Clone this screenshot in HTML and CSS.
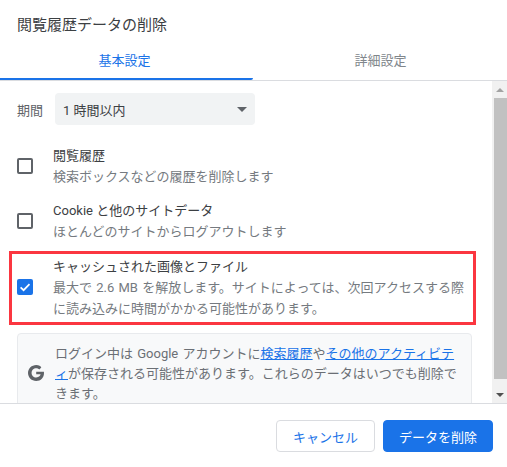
FILE: index.html
```html
<!DOCTYPE html>
<html lang="ja">
<head>
<meta charset="utf-8">
<title>閲覧履歴データの削除</title>
<link rel="stylesheet" href="styles.css">
</head>
<body>
<div class="dialog">
  <h1 class="title">閲覧履歴データの削除</h1>
  <div class="tabs">
    <div class="tab tab-active">基本設定</div>
    <div class="tab">詳細設定</div>
  </div>
  <div class="middle">
    <div class="content">
      <div class="period">
        <span class="period-label">期間</span>
        <div class="select">
          <span>1 時間以内</span>
          <span class="select-arrow"></span>
        </div>
      </div>
      <div class="option option-first">
        <span class="checkbox"></span>
        <div class="option-text">
          <div class="option-title">閲覧履歴</div>
          <div class="option-sub">検索ボックスなどの履歴を削除します</div>
        </div>
      </div>
      <div class="option">
        <span class="checkbox"></span>
        <div class="option-text">
          <div class="option-title">Cookie と他のサイトデータ</div>
          <div class="option-sub">ほとんどのサイトからログアウトします</div>
        </div>
      </div>
      <div class="option option-marked">
        <span class="checkbox checkbox-on">
          <svg viewBox="0 0 16 16" width="16" height="16"><path d="M3.6 8.3 6.6 11.2 12.5 5.2" fill="none" stroke="#fff" stroke-width="1.7"/></svg>
        </span>
        <div class="option-text">
          <div class="option-title">キャッシュされた画像とファイル</div>
          <div class="option-sub">最大で 2.6 MB を解放します。サイトによっては、次回アクセスする際に読み込みに時間がかかる可能性があります。</div>
        </div>
      </div>
      <div class="notice">
        <svg class="g-icon" viewBox="0 0 16 16" width="16" height="16"><path d="M8.2 6.8v2.5h4.4c-.2 1.2-1.500 3.200-4.400 3.200-2.600 0-4.600-2.100-4.600-4.600s2-4.600 4.600-4.600c1.500 0 2.500.6 3.100 1.200l2-1.900C12.900 1 10.800 0 8.200 0 3.700 0 0 3.600 0 8s3.700 8 8.200 8c4.700 0 7.800-3.300 7.800-8 0-.5-.1-.9-.1-1.200H8.200z" fill="#5f6368"/></svg>
        <p class="notice-text">ログイン中は Google アカウントに<a href="#">検索履歴</a>や<a href="#">その他のアクティビティ</a>が保存される可能性があります。これらのデータはいつでも削除できます。</p>
      </div>
    </div>
    <div class="scrollbar">
      <div class="sb-btn"><span class="sb-up"></span></div>
      <div class="sb-thumb"></div>
      <div class="sb-track"></div>
      <div class="sb-btn"><span class="sb-down"></span></div>
    </div>
  </div>
  <div class="footer">
    <button class="btn btn-cancel">キャンセル</button>
    <button class="btn btn-primary">データを削除</button>
  </div>
</div>
</body>
</html>
```

FILE: styles.css
```css
* { box-sizing: border-box; }
html, body { margin: 0; padding: 0; background: #fff; }
body {
  font-family: Roboto, "Noto Sans CJK JP", sans-serif;
  font-size: 13px;
  color: #5f6368;
}
.dialog { width: 507px; height: 467px; display: flex; flex-direction: column; overflow: hidden; }
.title {
  margin: 0;
  height: 40px;
  padding: 15px 17px 0;
  font-size: 15px;
  font-weight: 400;
  line-height: 20px;
  color: #3c4043;
}
.tabs { display: flex; height: 41px; border-bottom: 1px solid #dadce0; }
.tab {
  width: 253px;
  height: 40px;
  line-height: 41px;
  text-align: center;
  font-size: 13px;
  color: #80868b;
}
.tab + .tab { margin-left: 1px; }
.tab-active { color: #1a73e8; border-bottom: 2px solid #1a73e8; border-bottom-right-radius: 2px; padding-right: 4px; }
.middle { height: 322px; display: flex; }
.content { width: 492px; height: 322px; overflow: hidden; padding: 12px 0 0; }
.period { display: flex; align-items: center; padding-left: 17px; }
.period-label { width: 38px; }
.select {
  width: 200px;
  height: 32px;
  background: #f1f3f4;
  border-radius: 4px;
  padding: 0 8px;
  display: flex;
  align-items: center;
  justify-content: space-between;
  color: #3c4043;
}
.select-arrow {
  width: 0;
  height: 0;
  border-left: 5px solid transparent;
  border-right: 5px solid transparent;
  border-top: 5px solid #5f6368;
}
.option {
  display: flex;
  align-items: center;
  width: 467px;
  margin-left: 9px;
  padding-left: 8px;
  height: 55px;
  line-height: 20px;
}
.option-first { margin-top: 14px; }
.option-marked {
  height: 74px;
  margin-top: 2px;
  outline: 3px solid #fb3640;
  outline-offset: -3px;
}
.option-text { margin-left: 20px; width: 413px; }
.option-title { color: #3c4043; margin-bottom: 1px; }
.option-sub { color: #757a80; line-height: 20.500px; word-spacing: 1px; }
.checkbox {
  flex: none;
  width: 16px;
  height: 16px;
  margin-bottom: 2px;
  border: 2px solid #5f6368;
  border-radius: 2px;
}
.checkbox-on { background: #1a73e8; border: 0; display: block; }
.checkbox-on svg { display: block; }
.notice {
  margin: 8px 0 0 17px;
  width: 455px;
  height: 90px;
  padding: 10px 10px 0 10px;
  display: flex;
  background: #f8f9fa;
  border: 1px solid #e8eaed;
  border-radius: 4px;
}
.g-icon { flex: none; margin-top: 21px; }
.notice-text { margin: 0 0 0 11px; line-height: 20px; width: 406px; color: #6b6f75; word-spacing: 1px; }
.notice-text a { color: #1a73e8; text-decoration: underline; }
.scrollbar {
  width: 15px;
  height: 322px;
  background: #f1f1f1;
  display: flex;
  flex-direction: column;
}
.sb-btn { height: 17px; display: flex; align-items: center; justify-content: center; flex: none; }
.sb-up {
  width: 0; height: 0;
  border-left: 4px solid transparent;
  border-right: 4px solid transparent;
  border-bottom: 4px solid #a3a3a3;
}
.sb-down {
  width: 0; height: 0;
  border-left: 4px solid transparent;
  border-right: 4px solid transparent;
  border-top: 4px solid #505050;
}
.sb-thumb { flex: none; height: 281px; background: #c1c1c1; margin-left: 2px; }
.sb-track { flex: 1; }
.footer {
  flex: 1;
  border-top: 1px solid #dadce0;
  display: flex;
  justify-content: flex-end;
  gap: 8px;
  padding: 16px 14px 0 0;
}
.btn {
  height: 32px;
  border-radius: 4px;
  font: inherit;
  font-size: 13px;
  padding: 0;
}
.btn-cancel { width: 99px; background: #fff; border: 1px solid #dadce0; color: #1a73e8; }
.btn-primary { width: 110px; background: #1a73e8; border: 1px solid #1a73e8; color: #fff; }
```
